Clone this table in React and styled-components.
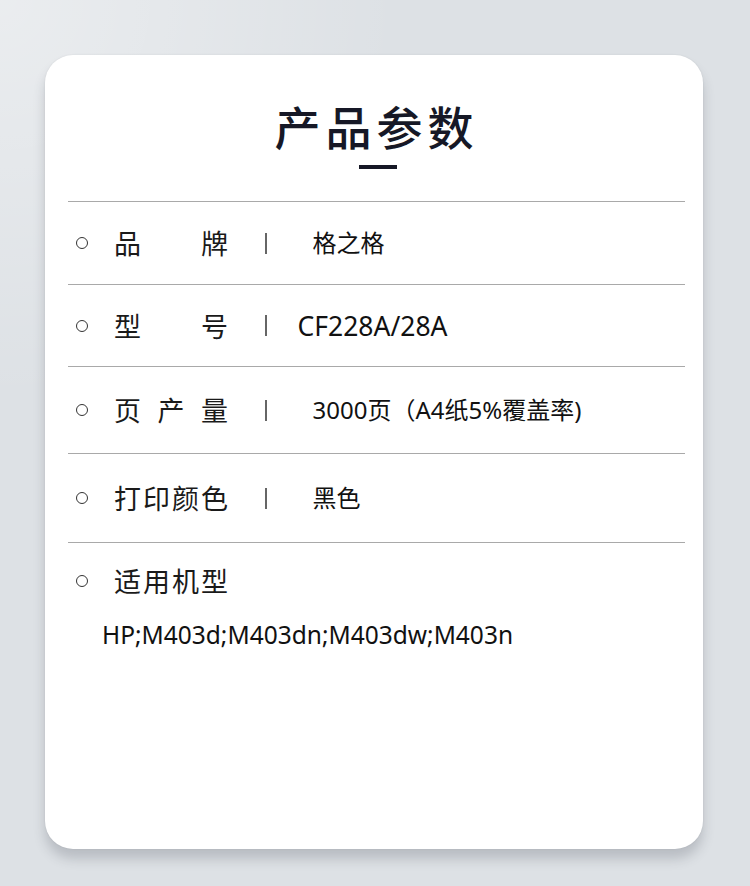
import React from 'react';
import styled, { createGlobalStyle } from 'styled-components';

const GlobalStyle = createGlobalStyle`
    html, body {
        margin: 0;
        padding: 0;
    }
    body {
        width: 750px;
        height: 886px;
        overflow: hidden;
        font-family: "Noto Sans CJK SC", "Noto Sans", sans-serif;
    }
`;

const Page = styled.div`
    width: 750px;
    height: 886px;
    padding-top: 55px;
    box-sizing: border-box;
    background:
        radial-gradient(circle at 0 0, rgba(255, 255, 255, 0.4), rgba(255, 255, 255, 0) 400px),
        #dde1e5;
`;

const Card = styled.div`
    width: 658px;
    height: 794px;
    margin-left: 45px;
    box-sizing: border-box;
    padding: 0 18px 0 23px;
    background-color: #FFFFFF;
    border-radius: 28px;
    box-shadow: 0 10px 12px rgba(60, 66, 76, 0.22), 0 0 2px rgba(0, 0, 0, 0.08);
`;

const Header = styled.div`
    display: flex;
    flex-direction: column;
    align-items: center;
    padding-top: 42px;
    height: 146px;
    box-sizing: border-box;
`;

const Title = styled.h1`
    margin: 0;
    font-family: "Noto Sans CJK SC", sans-serif;
    font-size: 46px;
    line-height: 56px;
    font-weight: 500;
    letter-spacing: 5px;
    color: #161826;
`;

const TitleBar = styled.div`
    width: 38px;
    height: 4px;
    margin-top: 12px;
    margin-left: 2px;
    background-color: #161826;
`;

const List = styled.div`
    display: flex;
    flex-direction: column;
`;

const Row = styled.div`
    display: flex;
    align-items: center;
    height: ${props => props.$height}px;
    padding-left: 8px;
    border-top: 1.5px solid #a9a9a9;
    box-sizing: border-box;
`;

const LastRow = styled.div`
    border-top: 1.5px solid #a9a9a9;
    padding-top: 21px;
`;

const LabelLine = styled.div`
    display: flex;
    align-items: center;
    padding-left: 8px;
`;

const Dot = styled.span`
    width: 10px;
    height: 10px;
    border: 1.6px solid #333;
    border-radius: 50%;
    flex-shrink: 0;
`;

const Label = styled.div`
    display: flex;
    justify-content: space-between;
    width: 114px;
    margin-left: 26px;
    font-size: 27px;
    line-height: 34px;
    font-weight: 400;
    color: #1a1a1a;
`;

const Separator = styled.span`
    width: 1.5px;
    height: 21px;
    margin-left: 37px;
    background-color: #666;
`;

const Value = styled.div`
    margin-left: ${props => props.$offset}px;
    font-family: "Noto Sans", "Noto Sans CJK SC", sans-serif;
    font-size: ${props => props.$size}px;
    line-height: 32px;
    color: #111;
    white-space: nowrap;
`;

const Models = styled.div`
    margin-top: 21px;
    padding-left: 34px;
    font-family: "Noto Sans", "Noto Sans CJK SC", sans-serif;
    font-size: 24.5px;
    line-height: 32px;
    color: #111;
`;

const specs = [
    { label: ['品', '牌'], value: '格之格', height: 83, offset: 46, size: 24 },
    { label: ['型', '号'], value: 'CF228A/28A', height: 82, offset: 31, size: 26.5 },
    { label: ['页', '产', '量'], value: '3000页（A4纸5%覆盖率)', height: 87, offset: 46, size: 24 },
    { label: ['打', '印', '颜', '色'], value: '黑色', height: 89, offset: 46, size: 24 },
];

const App = () => {
    return (
        <>
            <GlobalStyle />
            <Page>
                <Card>
                    <Header>
                        <Title>产品参数</Title>
                        <TitleBar />
                    </Header>
                    <List>
                        {specs.map(spec => (
                            <Row key={spec.value} $height={spec.height}>
                                <Dot />
                                <Label>
                                    {spec.label.map(ch => <span key={ch}>{ch}</span>)}
                                </Label>
                                <Separator />
                                <Value $offset={spec.offset} $size={spec.size}>{spec.value}</Value>
                            </Row>
                        ))}
                        <LastRow>
                            <LabelLine>
                                <Dot />
                                <Label>
                                    <span>适</span><span>用</span><span>机</span><span>型</span>
                                </Label>
                            </LabelLine>
                            <Models>HP;M403d;M403dn;M403dw;M403n</Models>
                        </LastRow>
                    </List>
                </Card>
            </Page>
        </>
    );
};

export default App;
